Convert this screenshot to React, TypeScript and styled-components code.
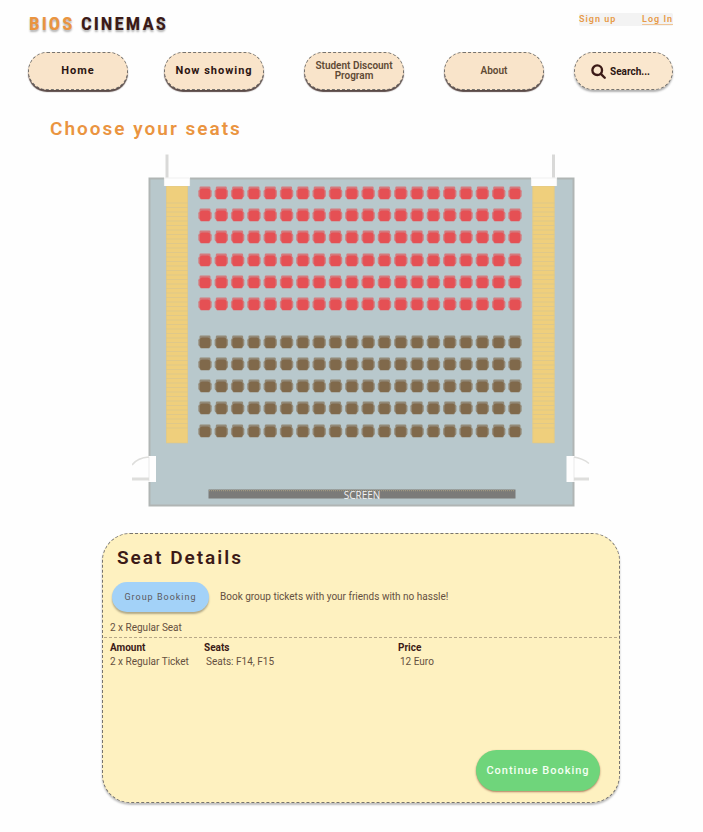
import React from "react";
import styled, { createGlobalStyle } from "styled-components";

const GlobalStyle = createGlobalStyle`
  * { box-sizing: border-box; }
  body {
    margin: 0;
    background: #fefefe;
    color: #3b1a17;
    font-family: Roboto, "Liberation Sans", sans-serif;
  }
`;

const Page = styled.div`
  padding: 12px 30px 28px 28px;
`;

const TopBar = styled.header`
  display: flex;
  justify-content: space-between;
  align-items: flex-start;
  height: 40px;
`;

const Logo = styled.a`
  padding-left: 1px;
  font-family: "Roboto Condensed", Roboto, sans-serif;
  font-size: 19px;
  font-weight: 700;
  line-height: 24px;
  letter-spacing: 2px;
  color: #3b1a17;
  text-decoration: none;
  text-shadow: 0 2px 2px rgba(0, 0, 0, 0.3);
`;

const LogoAccent = styled.span`
  color: #ea9440;
`;

const Account = styled.div`
  display: flex;
  justify-content: space-between;
  width: 94px;
  margin-top: 1px;
  background: #f3f3f3;
  border-radius: 2px;
`;

const AccountLink = styled.a<{ $underlined?: boolean }>`
  font-size: 9px;
  font-weight: 600;
  line-height: 13px;
  letter-spacing: 1px;
  color: #e79a48;
  text-decoration: ${(p) => (p.$underlined ? "underline" : "none")};
  text-decoration-color: #f0c596;
  text-underline-offset: 2px;
`;

const Nav = styled.nav`
  display: grid;
  grid-template-columns: 136fr 140fr 140fr 130fr 99fr;
`;

const NavButton = styled.button<{ $soft?: boolean }>`
  width: 100px;
  height: 38px;
  padding: 0 4px;
  border: 1px dashed #77746f;
  border-radius: 19px;
  background: #f9e4ca;
  box-shadow: 0 2px 1px #5a4a47;
  color: ${(p) => (p.$soft ? "#5f4a35" : "#2c1512")};
  font-family: inherit;
  font-size: ${(p) => (p.$soft ? 10 : 11)}px;
  font-weight: ${(p) => (p.$soft ? 600 : 700)};
  line-height: 10px;
  letter-spacing: ${(p) => (p.$soft ? 0 : 1)}px;
`;

const SearchBox = styled.label`
  display: flex;
  align-items: center;
  gap: 4px;
  width: 99px;
  height: 38px;
  padding: 0 10px 0 16px;
  border: 1px dashed #77746f;
  border-radius: 19px;
  background: #fae7ce;
  box-shadow: 0 2px 2px rgba(0, 0, 0, 0.3);

  svg { flex: none; }
`;

const SearchInput = styled.input`
  min-width: 0;
  width: 100%;
  padding: 0;
  border: 0;
  outline: 0;
  background: transparent;
  color: #2c1512;
  font-family: inherit;
  font-size: 10px;
  font-weight: 700;
  &::placeholder { color: #2c1512; opacity: 1; }
`;

const Title = styled.h1`
  margin: 26px 0 12px 22px;
  color: #ea9440;
  font-size: 19px;
  font-weight: 600;
  line-height: 26px;
  letter-spacing: 2px;
`;

const Main = styled.main`
  padding: 0 53px 0 74px;
`;

const PlanFrame = styled.figure`
  margin: 0 30px 26px;
`;

const Plan = styled.svg`
  display: block;
  width: 100%;
  height: auto;
`;

const Card = styled.section`
  display: flex;
  flex-direction: column;
  min-height: 270px;
  padding: 12px 2px 11px 1px;
  border: 1px dashed #77746f;
  border-radius: 28px;
  background: #fef1c0;
  box-shadow: 0 2px 2px rgba(0, 0, 0, 0.25);
`;

const CardTitle = styled.h2`
  margin: 0 0 12px 13px;
  font-size: 19px;
  font-weight: 600;
  line-height: 24px;
  letter-spacing: 2px;
`;

const GroupRow = styled.div`
  display: flex;
  align-items: center;
  gap: 11px;
  margin-left: 8px;
`;

const GroupButton = styled.button`
  width: 97px;
  height: 30px;
  padding: 0;
  border: 0;
  border-radius: 15px;
  background: #a3d2f8;
  box-shadow: 0 2px 2px rgba(0, 0, 0, 0.3);
  color: #5b5a60;
  font-family: inherit;
  font-size: 9px;
  letter-spacing: 1px;
`;

const Text = styled.p`
  margin: 0;
  color: #65503f;
  font-size: 10px;
  line-height: 12px;
`;

const Summary = styled(Text)`
  padding: 10px 0 3px 6px;
  border-bottom: 1px dashed #b8a888;
`;

const Tickets = styled.table`
  width: 100%;
  margin-top: 3px;
  border-collapse: collapse;
  table-layout: fixed;
  font-size: 10px;
  line-height: 14px;
  text-align: left;
  white-space: nowrap;
`;

const Head = styled.th<{ $width?: number }>`
  width: ${(p) => (p.$width ? `${p.$width}px` : "auto")};
  padding: 0 0 0 6px;
  font-weight: 700;
`;

const Cell = styled.td<{ $inset?: boolean }>`
  padding: 0 0 0 ${(p) => (p.$inset ? 8 : 6)}px;
  color: #65503f;
`;

const ContinueButton = styled.button`
  align-self: flex-end;
  width: 124px;
  height: 41px;
  margin-top: auto;
  margin-right: 17px;
  padding: 0;
  border: 0;
  border-radius: 21px;
  background: #6fd57b;
  box-shadow: 0 1px 2px rgba(120, 50, 30, 0.6);
  color: #f4fff2;
  font-family: inherit;
  font-size: 11px;
  font-weight: 500;
  letter-spacing: 1px;
`;

const PlanLabel = styled.text`
  fill: #f2f2f2;
  font-family: "Open Sans", sans-serif;
  font-size: 10px;
  font-weight: 500;
`;

const redRows = [193, 215, 237, 260, 282, 304];
const brownRows = [342, 364, 386, 408, 431];
const columns = Array.from({ length: 20 }, (_, i) => 205 + (i * 310) / 19);
const steps = Array.from({ length: 51 }, (_, i) => 203 + i * 4.5);

function Seat({ x, y, color }: { x: number; y: number; color: string }) {
  return (
    <g transform={`translate(${x} ${y})`} fill={color}>
      <rect x="-5.5" y="-6.5" width="11" height="3" rx="1.2" opacity="0.65" />
      <rect x="-6.7" y="-3.8" width="13.4" height="8.3" rx="2" opacity="0.6" />
      <rect x="-5.6" y="-4.5" width="11.2" height="11" rx="2.8" opacity="0.5" />
      <rect x="-5" y="-4.3" width="10" height="10.4" rx="2.2" />
    </g>
  );
}

function Stairs({ x }: { x: number }) {
  return (
    <g>
      <rect x={x} y="186" width="22" height="257" fill="#efcf7c" />
      {steps.map((y) => (
        <path key={y} d={`M${x} ${y}h22`} stroke="#dcc78a" strokeWidth="0.9" />
      ))}
      <rect x={x + 0.3} y="186" width="21.4" height="257" fill="none" stroke="#d8c792" strokeWidth="0.6" />
    </g>
  );
}

function SeatPlan() {
  return (
    <PlanFrame>
      <Plan viewBox="132 154 458 353" role="img" aria-label="Seat plan">
        <rect x="149.5" y="178.5" width="424" height="327" fill="#b8c8cc" stroke="#b0b5b4" strokeWidth="2" />
        <Stairs x={166} />
        <Stairs x={532.5} />
        <rect x="164" y="177" width="26" height="9" fill="#fefefe" />
        <rect x="531" y="177" width="26" height="9" fill="#fefefe" />
        <path d="M164.300 186v-8h25.400v8M531.300 186v-8h25.400v8" fill="none" stroke="#e2e2e0" strokeWidth="0.5" />
        <path d="M167 154.500v23M553.500 154.500v23" stroke="#d9d9d8" strokeWidth="3" />
        <rect x="148" y="456" width="8" height="26" fill="#fefefe" />
        <rect x="566.5" y="456" width="8.5" height="26" fill="#fefefe" />
        <path d="M149 457v24.500M574 457v24.500" stroke="#dddddd" strokeWidth="0.6" />
        <path d="M132 465q5 -7 17 -8M589 463.500q-6 -5 -15 -6.500" fill="none" stroke="#dededc" strokeWidth="1.500" />
        <path d="M132 479h17M574 479h15" stroke="#dededc" strokeWidth="3" />
        {redRows.map((y) => columns.map((x) => <Seat key={`${x}-${y}`} x={x} y={y} color="#e55054" />))}
        {brownRows.map((y) => columns.map((x) => <Seat key={`${x}-${y}`} x={x} y={y} color="#80694b" />))}
        <rect x="208.5" y="489.5" width="307" height="9" fill="#7b7b79" />
        <path d="M209 490.500h306" stroke="#a0987f" strokeWidth="1.500" strokeDasharray="1 1" />
        <PlanLabel x="362" y="498.500" textAnchor="middle">SCREEN</PlanLabel>
      </Plan>
    </PlanFrame>
  );
}

function SearchIcon() {
  return (
    <svg width="15" height="15" viewBox="0 0 14 14" fill="none" stroke="#3b1a17" strokeWidth="2.200" aria-hidden="true">
      <circle cx="5.800" cy="5.800" r="4.500" />
      <path d="M9.200 9.200l3.600 3.600" strokeLinecap="round" />
    </svg>
  );
}

export default function App() {
  return (
    <>
      <GlobalStyle />
      <Page>
        <TopBar>
          <Logo href="#"><LogoAccent>BIOS</LogoAccent> CINEMAS</Logo>
          <Account>
            <AccountLink href="#signup">Sign up</AccountLink>
            <AccountLink href="#login" $underlined>Log In</AccountLink>
          </Account>
        </TopBar>
        <Nav>
          <NavButton>Home</NavButton>
          <NavButton>Now showing</NavButton>
          <NavButton $soft>Student Discount Program</NavButton>
          <NavButton $soft>About</NavButton>
          <SearchBox>
            <SearchIcon />
            <SearchInput type="text" placeholder="Search..." aria-label="Search" />
          </SearchBox>
        </Nav>
        <Title>Choose your seats</Title>
        <Main>
          <SeatPlan />
          <Card>
            <CardTitle>Seat Details</CardTitle>
            <GroupRow>
              <GroupButton>Group Booking</GroupButton>
              <Text>Book group tickets with your friends with no hassle!</Text>
            </GroupRow>
            <Summary>2 x Regular Seat</Summary>
            <Tickets>
              <thead>
                <tr>
                  <Head $width={94}>Amount</Head>
                  <Head $width={194}>Seats</Head>
                  <Head>Price</Head>
                </tr>
              </thead>
              <tbody>
                <tr>
                  <Cell>2 x Regular Ticket</Cell>
                  <Cell $inset>Seats: F14, F15</Cell>
                  <Cell $inset>12 Euro</Cell>
                </tr>
              </tbody>
            </Tickets>
            <ContinueButton>Continue Booking</ContinueButton>
          </Card>
        </Main>
      </Page>
    </>
  );
}
